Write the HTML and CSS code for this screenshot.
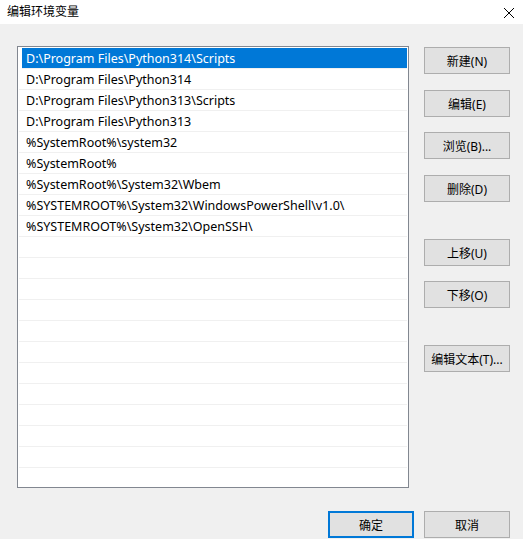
FILE: index.html
```html
<!DOCTYPE html>
<html lang="zh-CN">
<head>
  <meta charset="UTF-8">
  <title>编辑环境变量</title>
  <link rel="stylesheet" href="styles.css">
</head>
<body>
  <div class="dialog">
    <!-- 标题栏 -->
    <div class="title-bar">
      <span class="title">编辑环境变量</span>
      <span class="close-btn">
        <svg width="12" height="12" viewBox="0 0 12 12">
          <path d="M1 1 L11 11 M11 1 L1 11" stroke="#000" stroke-width="1" fill="none"/>
        </svg>
      </span>
    </div>

    <div class="body">
      <div class="main">
        <!-- 路径列表 -->
        <ul class="path-list">
          <li class="selected">D:\Program Files\Python314\Scripts</li>
          <li>D:\Program Files\Python314</li>
          <li>D:\Program Files\Python313\Scripts</li>
          <li>D:\Program Files\Python313</li>
          <li>%SystemRoot%\system32</li>
          <li>%SystemRoot%</li>
          <li>%SystemRoot%\System32\Wbem</li>
          <li>%SYSTEMROOT%\System32\WindowsPowerShell\v1.0\</li>
          <li>%SYSTEMROOT%\System32\OpenSSH\</li>
          <li></li><li></li><li></li><li></li><li></li><li></li><li></li><li></li><li></li><li></li><li></li>
        </ul>

        <!-- 右侧按钮 -->
        <div class="side-btns">
          <button class="btn">新建(N)</button>
          <button class="btn gap-1">编辑(E)</button>
          <button class="btn">浏览(B)...</button>
          <button class="btn gap-1">删除(D)</button>
          <button class="btn group-start">上移(U)</button>
          <button class="btn">下移(O)</button>
          <button class="btn group-start">编辑文本(T)...</button>
        </div>
      </div>

      <div class="footer">
        <button class="btn default">确定</button>
        <button class="btn">取消</button>
      </div>
    </div>
  </div>
</body>
</html>
```

FILE: styles.css
```css
* {
  margin: 0;
  padding: 0;
  box-sizing: border-box;
}

body {
  font-family: "Noto Sans", "Noto Sans CJK SC", sans-serif;
  font-size: 12px;
  color: #000;
  background-color: #f0f0f0;
}

.dialog {
  width: 523px;
  height: 539px;
  overflow: hidden;
}

.title-bar {
  height: 24px;
  background-color: #fff;
  display: flex;
  align-items: center;
  justify-content: space-between;
  padding: 0 8px 2px 7px;
}

.title {
  font-size: 12px;
}

.close-btn {
  display: flex;
  margin-top: 3px;
}

.body {
  padding: 22px 0 0 17px;
}

.main {
  display: flex;
}

.path-list {
  list-style: none;
  width: 392px;
  height: 442px;
  border: 1px solid #828790;
  background-color: #fff;
  overflow: hidden;
  padding: 1px 1px 0 1px;
}

.path-list li {
  height: 21px;
  line-height: 21px;
  font-size: 12.5px;
  padding-left: 7px;
  border-bottom: 1px solid #f0f0f0;
  white-space: nowrap;
}

.path-list li.selected {
  background-color: #0078d7;
  color: #fff;
  margin-left: 3px;
  padding-left: 4px;
}

.side-btns {
  display: flex;
  flex-direction: column;
  margin-left: 15px;
  padding-top: 1px;
  gap: 15px;
}

.btn {
  width: 86px;
  height: 27px;
  font-family: inherit;
  font-size: 12px;
  color: #000;
  background-color: #e1e1e1;
  border: 1px solid #adadad;
}

.btn.gap-1 {
  margin-top: 1px;
}

.btn.group-start {
  margin-top: 22px;
}

.footer {
  display: flex;
  justify-content: flex-end;
  gap: 10px;
  padding-right: 13px;
  margin-top: 23px;
}

.btn.default {
  border: 2px solid #0078d7;
}
```
